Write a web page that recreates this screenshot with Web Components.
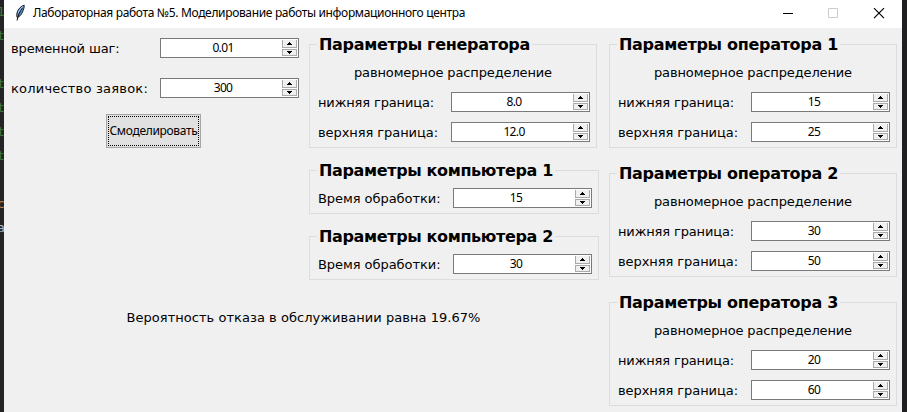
<!DOCTYPE html>
<html lang="ru">
<head>
<meta charset="utf-8">
<title>Лабораторная работа №5</title>
<style>
html, body { margin: 0; height: 412px; overflow: hidden; background: #222; }
</style>
</head>
<body>
<app-window></app-window>
<script>
function define(name, html, connected) {
  customElements.define(name, class extends HTMLElement {
    constructor() {
      super();
      this.attachShadow({ mode: 'open' }).innerHTML = html;
    }
    connectedCallback() { if (connected) connected.call(this, this.shadowRoot); }
  });
}

/* One line of text that is tracked to an exact advance width. */
define('ui-text', `
  <style>
    :host { display: block; flex: none; white-space: nowrap; }
    span { display: inline-block; }
  </style><span><slot></slot></span>`, function (root) {
  const span = root.querySelector('span');
  const want = parseFloat(this.getAttribute('w'));
  if (!want) return;
  const n = this.textContent.length;
  span.style.letterSpacing = '0px';
  const s = (want - span.getBoundingClientRect().width) / n;
  span.style.letterSpacing = s.toFixed(3) + 'px';
});

define('spin-box', `
  <style>
    :host { display: flex; flex: none; box-sizing: border-box; width: 139px; height: 20px;
      border: 1px solid #7a7a7a; background: #fff; padding: 1px 1px 1px 0; }
    .v { flex: 1; display: flex; justify-content: center; padding-left: 3px;
      font: 12px/16px "Noto Sans", sans-serif; color: #000; }
    .b { display: grid; grid-template-rows: 8px 7px; gap: 1px; width: 15px; }
    svg { display: block; width: 15px; height: 100%; }
  </style>
  <div class="v"></div>
  <div class="b">
    <svg viewBox="0 0 15 8"><path fill="#f0f0f0" d="M0 0h15v8H0z"/><path fill="#aaa" d="M0 0h1v8H0zM14 0h1v8h-1zM0 7h15v1H0z"/><path d="M7 2h1v1h1v1h1v1H5V4h1V3h1z"/></svg>
    <svg viewBox="0 0 15 7"><path fill="#aaa" d="M0 0h15v7H0z"/><path fill="#f0f0f0" d="M1 1h13v5H1z"/><path d="M5 2h5v1H9v1H8v1H7V4H6V3H5z"/></svg>
  </div>`, function (root) {
  const v = this.getAttribute('value');
  const w = v.length * 6.15 - (v.includes('.') ? 3.4 : 0);
  root.querySelector('.v').innerHTML = `<ui-text w="${w}">${v}</ui-text>`;
});

define('field-row', `
  <style>
    :host { display: flex; align-items: center; justify-content: space-between; height: 30px;
      font: 13px/18px "DejaVu Sans", sans-serif; color: #000; }
    ::slotted(ui-text) { padding-top: 2px; }
  </style><slot></slot><slot name="box"></slot>`);

define('param-group', `
  <style>
    :host { display: block; }
    fieldset { box-sizing: border-box; margin: 0; border: 1px solid #dcdcdc;
      padding: 2px 6px 0 8px; min-width: 0; }
    legend { box-sizing: border-box; height: 22px; margin-left: -1px; padding: 1px 2px 0;
      font: bold 16px/22px "DejaVu Sans", sans-serif; color: #000; }
  </style>
  <fieldset><legend></legend><slot></slot></fieldset>`, function (root) {
  root.querySelector('legend').innerHTML =
    `<ui-text w="${this.getAttribute('tw')}">${this.getAttribute('heading')}</ui-text>`;
});

define('distribution-group', `
  <style>
    :host { display: block; width: 288px; }
    .sub { height: 30px; display: flex; align-items: center; padding: 2px 0 0 36px; box-sizing: border-box;
      font: 13px/18px "DejaVu Sans", sans-serif; }
  </style><div id="r"></div>`, function (root) {
  const a = n => this.getAttribute(n);
  root.getElementById('r').innerHTML = `
    <param-group heading="${a('heading')}" tw="${a('tw')}">
      <div class="sub"><ui-text w="198">равномерное распределение</ui-text></div>
      <field-row><ui-text w="116">нижняя граница:</ui-text><spin-box slot="box" value="${a('low')}"></spin-box></field-row>
      <field-row><ui-text w="120">верхняя граница:</ui-text><spin-box slot="box" value="${a('high')}"></spin-box></field-row>
    </param-group>`;
});

define('computer-group', `
  <style>:host { display: block; width: 290px; }</style><div id="r"></div>`, function (root) {
  root.getElementById('r').innerHTML = `
    <param-group heading="${this.getAttribute('heading')}" tw="234">
      <field-row><ui-text w="122.5">Время обработки:</ui-text><spin-box slot="box" value="${this.getAttribute('value')}"></spin-box></field-row>
    </param-group>`;
});

define('push-button', `
  <style>
    :host { display: block; width: 95px; height: 34px; }
    button { box-sizing: border-box; width: 100%; height: 100%; margin: 0; padding: 1px;
      border: 1px solid #a6a6a6; border-radius: 0; background: #e1e1e1; color: #000; }
    div { box-sizing: border-box; height: 100%; border: 1px dotted #000; display: flex;
      align-items: center; justify-content: center; font: 12px/16px "Noto Sans", sans-serif; }
  </style><button><div><slot></slot></div></button>`);

define('title-bar', `
  <style>
    :host { display: flex; align-items: center; height: 28px; background: #fff; box-sizing: border-box;
      padding: 0 17px 3px 10px; font: 12px/16px "Noto Sans", sans-serif; color: #000; }
    svg { display: block; flex: none; }
    .f { margin-right: 7px; }
    .c { margin-left: auto; }
  </style>
  <svg class="f" width="12" height="18" viewBox="0 0 12 18">
    <path d="M10.2 1.200C7 2 4 5 3 9c-.5 2-.2 4 .2 4.500 1.800-.3 4-2.500 5.300-5.500C9.500 6 10.400 3 10.200 1.200z" fill="#5b94cf" stroke="#17202c" stroke-width="1"/>
    <path d="M8.500 4C6 7 4.500 10.500 3 16.500" fill="none" stroke="#111" stroke-width="1"/>
    <path d="M8.700 2.700C6.500 4 5 6.500 4.300 9" fill="none" stroke="#a9d0f5" stroke-width="1"/>
  </svg>
  <ui-text w="432">Лабораторная работа №5. Моделирование работы информационного центра</ui-text>
  <svg class="c" width="102" height="12" viewBox="0 0 102 12">
    <path d="M0 6h10v1H0z"/><path d="M45.500 1.500h9v9h-9z" fill="none" stroke="#ccc"/>
    <path d="M91 1.200l10 10M101 1.200l-10 10" fill="none" stroke="#000" stroke-width="1.150"/>
  </svg>`);

define('editor-edge', `
  <style>
    :host { display: block; width: 4px; height: 412px; overflow: hidden; background: #242424;
      font: 13px/24px "DejaVu Sans Mono", monospace; color: #3f7a3b; }
    div { height: 24px; margin-left: -3px; }
    .o { color: #bd8355; } .w { color: #a5b5be; }
  </style>
  <div>1</div><div>t</div><div></div><div>t</div><div>t</div><div>t</div><div>t</div><div></div>
  <div class="o">c</div><div class="w">a</div>`);

define('app-window', `
  <style>
    :host { display: grid; grid-template-columns: 4px 898px 5px; width: 907px; height: 412px; background: #1f1f21; }
    .win { height: 412px; background: #f0f0f0; overflow: hidden; }
    main { display: grid; grid-template-columns: 288px 290px 288px; column-gap: 10px; padding: 5px 5px 0 7px; }
    .left { display: flex; flex-direction: column; width: 288px; }
    .left field-row.second { margin-top: 10px; }
    push-button { margin: 11px 0 0 95px; }
    .result { margin: 161px 0 0 115.5px; font: 13px/18px "DejaVu Sans", sans-serif; color: #000; }
    .mid { display: flex; flex-direction: column; gap: 11px; }
    .right { display: flex; flex-direction: column; gap: 14px; }
  </style>
  <editor-edge></editor-edge>
  <div class="win">
    <title-bar></title-bar>
    <main>
      <div class="left">
        <field-row><ui-text w="108.5">временной шаг:</ui-text><spin-box slot="box" value="0.01"></spin-box></field-row>
        <field-row class="second"><ui-text w="137">количество заявок:</ui-text><spin-box slot="box" value="300"></spin-box></field-row>
        <push-button><ui-text w="88">Смоделировать</ui-text></push-button>
        <ui-text class="result" w="354">Вероятность отказа в обслуживании равна 19.67%</ui-text>
      </div>
      <div class="mid">
        <distribution-group heading="Параметры генератора" tw="211" low="8.0" high="12.0"></distribution-group>
        <computer-group heading="Параметры компьютера 1" value="15"></computer-group>
        <computer-group heading="Параметры компьютера 2" value="30"></computer-group>
      </div>
      <div class="right">
        <distribution-group heading="Параметры оператора 1" tw="219" low="15" high="25"></distribution-group>
        <distribution-group heading="Параметры оператора 2" tw="219" low="30" high="50"></distribution-group>
        <distribution-group heading="Параметры оператора 3" tw="219" low="20" high="60"></distribution-group>
      </div>
    </main>
  </div>`);
</script>
</body>
</html>
